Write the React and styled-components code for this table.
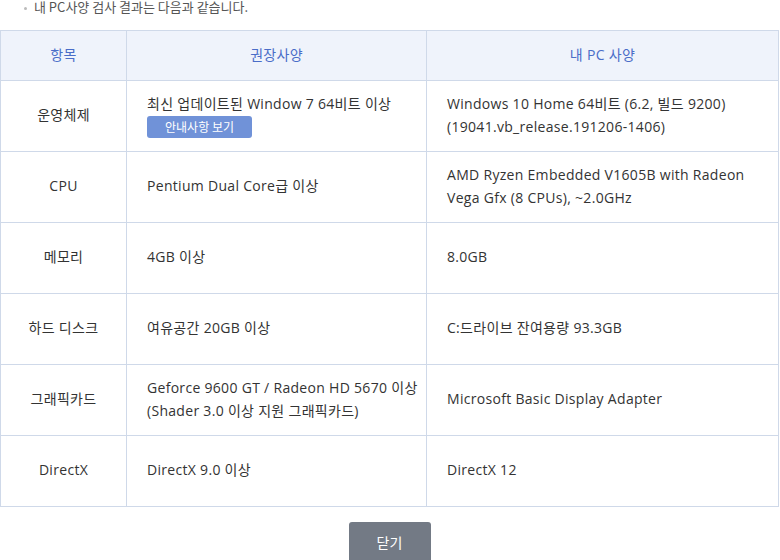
import styled, { createGlobalStyle } from "styled-components";

const GlobalStyle = createGlobalStyle`
  body {
    margin: 0;
    background: #fff;
    font-family: "Open Sans", "Noto Sans CJK KR", sans-serif;
    color: #333;
  }
`;

const Wrap = styled.div`
  width: 780px;
  height: 560px;
  overflow: hidden;
`;

const Caption = styled.p`
  margin: 0;
  height: 30px;
  padding-left: 34px;
  position: relative;
  font-family: "Noto Sans CJK KR", sans-serif;
  font-size: 13px;
  line-height: 14px;
  color: #555;

  &::before {
    content: "";
    position: absolute;
    left: 24px;
    top: 7px;
    width: 3px;
    height: 3px;
    border-radius: 50%;
    background: #bbb;
  }
`;

const Table = styled.table`
  width: 779px;
  border-collapse: collapse;
  table-layout: fixed;
  font-size: 14px;
`;

const Th = styled.th`
  box-sizing: border-box;
  height: 50px;
  padding: 0 0 3px;
  background: #eff3fb;
  border: 1px solid #cfd9e9;
  border-left-color: ${(p) => (p.first ? "#cfd9e9" : "#e6ecf6")};
  color: #4a6dc8;
  font-weight: 400;
  font-size: 14px;
  letter-spacing: 0.3px;
  text-align: center;
`;

const Td = styled.td`
  box-sizing: border-box;
  height: 71px;
  padding: ${(p) => (p.center ? "0 0 3px" : "0 6px 3px 20px")};
  border: 1px solid #cfd9e9;
  text-align: ${(p) => (p.center ? "center" : "left")};
  line-height: 23px;
  vertical-align: middle;
  letter-spacing: 0.3px;
`;

const Badge = styled.span`
  display: inline-block;
  margin-top: 1px;
  width: 105px;
  height: 22px;
  line-height: 22px;
  border-radius: 3px;
  background: #7092d8;
  color: #fff;
  font-family: "Noto Sans CJK KR", sans-serif;
  font-size: 12px;
  letter-spacing: 0;
  text-align: center;
  vertical-align: top;
`;

const Footer = styled.div`
  display: flex;
  justify-content: center;
  padding-top: 15px;
  padding-right: 1px;
`;

const CloseButton = styled.button`
  width: 82px;
  height: 40px;
  border: none;
  border-radius: 3px;
  background: #737a85;
  color: #fff;
  font-family: "Noto Sans CJK KR", sans-serif;
  font-size: 14px;
  cursor: pointer;
`;

const rows = [
  {
    label: "운영체제",
    need: (
      <>
        최신 업데이트된 Window 7 64비트 이상
        <br />
        <Badge>안내사항 보기</Badge>
      </>
    ),
    mine: (
      <>
        Windows 10 Home 64비트 (6.2, 빌드 9200)
        <br />
        (19041.vb_release.191206-1406)
      </>
    ),
  },
  {
    label: "CPU",
    need: "Pentium Dual Core급 이상",
    mine: (
      <>
        AMD Ryzen Embedded V1605B with Radeon
        <br />
        Vega Gfx (8 CPUs), ~2.0GHz
      </>
    ),
  },
  { label: "메모리", need: "4GB 이상", mine: "8.0GB" },
  { label: "하드 디스크", need: "여유공간 20GB 이상", mine: "C:드라이브 잔여용량 93.3GB" },
  {
    label: "그래픽카드",
    need: (
      <>
        Geforce 9600 GT / Radeon HD 5670 이상
        <br />
        (Shader 3.0 이상 지원 그래픽카드)
      </>
    ),
    mine: "Microsoft Basic Display Adapter",
  },
  { label: "DirectX", need: "DirectX 9.0 이상", mine: "DirectX 12" },
];

export default function App() {
  return (
    <Wrap>
      <GlobalStyle />
      <Caption>내 PC사양 검사 결과는 다음과 같습니다.</Caption>
      <Table>
        <colgroup>
          <col style={{ width: 126 }} />
          <col style={{ width: 300 }} />
          <col />
        </colgroup>
        <thead>
          <tr>
            <Th first>항목</Th>
            <Th>권장사양</Th>
            <Th>내 PC 사양</Th>
          </tr>
        </thead>
        <tbody>
          {rows.map((r) => (
            <tr key={r.label}>
              <Td center>{r.label}</Td>
              <Td>{r.need}</Td>
              <Td>{r.mine}</Td>
            </tr>
          ))}
        </tbody>
      </Table>
      <Footer>
        <CloseButton>닫기</CloseButton>
      </Footer>
    </Wrap>
  );
}
